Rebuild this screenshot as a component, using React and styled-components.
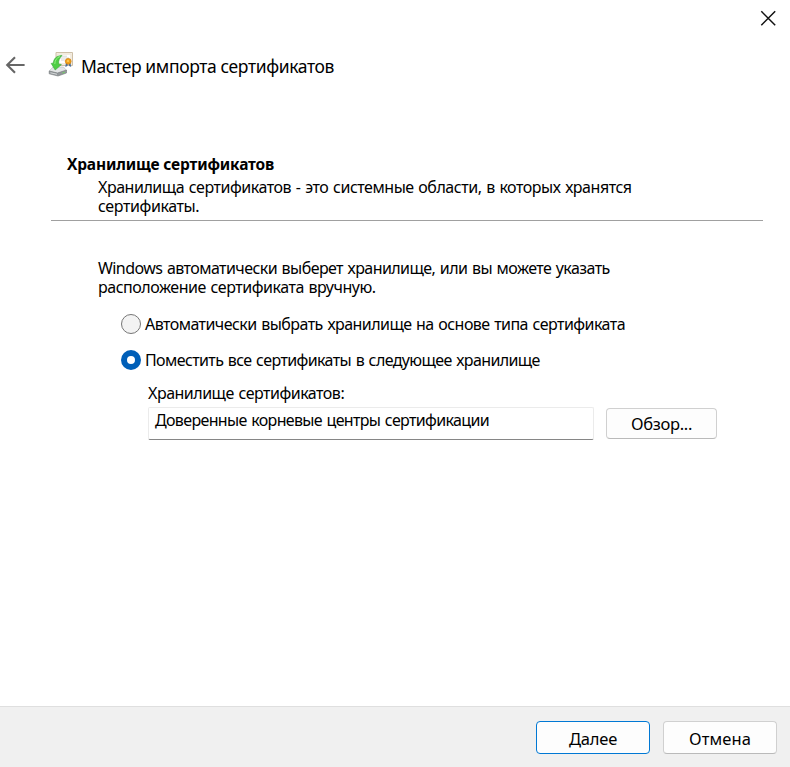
import styled, { createGlobalStyle } from "styled-components";

const GlobalStyle = createGlobalStyle`
  body {
    margin: 0;
    background-color: #fff;
    color: #000;
    font-family: "Noto Sans", "Open Sans", sans-serif;
  }
  button, input {
    font-family: inherit;
    color: inherit;
  }
`;

const Wizard = styled.div`
  display: flex;
  flex-direction: column;
  width: 790px;
  height: 767px;
  overflow: hidden;
`;

const TitleBar = styled.div`
  display: flex;
  justify-content: flex-end;
  height: 38px;
  padding-right: 13px;
`;
const CloseButton = styled.button`
  all: unset;
  width: 17px;
  height: 17px;
  margin-top: 10px;
  svg {
    display: block;
  }
`;

const Header = styled.header`
  display: flex;
  align-items: center;
  height: 54px;
  padding-left: 5px;
`;
const BackButton = styled.button`
  all: unset;
  width: 21px;
  height: 18px;
  margin-right: 22px;
  svg {
    display: block;
  }
`;
const HeaderIcon = styled.div`
  width: 26px;
  height: 26px;
  margin: 0 7px 2px 0;
  svg {
    display: block;
  }
`;
const WizardName = styled.h1`
  margin: 0;
  padding-top: 2px;
  font-size: 17.5px;
  font-weight: 400;
  line-height: 26px;
  letter-spacing: -0.38px;
  white-space: nowrap;
`;

const PageHead = styled.div`
  margin: 61px 27px 0 51px;
  height: 67px;
  border-bottom: 1px solid #a0a0a0;
`;
const PageTitle = styled.h2`
  margin: 0 0 3px 16px;
  font-size: 15.5px;
  font-weight: 700;
  line-height: 22px;
  letter-spacing: -0.17px;
`;
const PageText = styled.div`
  padding-left: 47px;
`;
const Line = styled.div`
  font-size: 16px;
  line-height: 19px;
  letter-spacing: ${(props) => props.$track}px;
  word-spacing: 1px;
  white-space: nowrap;
`;

const Content = styled.main`
  flex: 1;
  padding: 38px 0 0 98px;
`;
const Options = styled.div`
  display: flex;
  flex-direction: column;
  gap: 16px;
  margin: 17px 0 0 23px;
`;
const Option = styled.div`
  display: flex;
  align-items: center;
  gap: 4px;
  height: 20px;
`;
const Radio = styled.span`
  box-sizing: border-box;
  width: 20px;
  height: 20px;
  border-radius: 50%;
  border: ${(props) =>
    props.$checked ? "6px solid #005fb8" : "1px solid #767676"};
  background-color: ${(props) => (props.$checked ? "#fff" : "#f3f3f3")};
`;

const StoreField = styled.div`
  margin: 14px 0 0 50px;
`;
const StoreRow = styled.div`
  display: flex;
  align-items: center;
  gap: 12px;
  margin-top: 4px;
`;
const StoreBox = styled.div`
  box-sizing: border-box;
  width: 446px;
  height: 33px;
  padding: 3px 0 0 6px;
  border: 1px solid #ebebeb;
  border-bottom-color: #868686;
  border-radius: 2px;
`;

const Button = styled.button`
  box-sizing: border-box;
  width: ${(props) => props.$width}px;
  height: ${(props) => props.$height}px;
  padding: ${(props) => props.$drop || 0}px 0 0;
  border: 1px solid ${(props) => (props.$primary ? "#0078d4" : "#d0d0d0")};
  border-bottom-color: ${(props) => (props.$primary ? "#0078d4" : "#bababa")};
  border-radius: 4px;
  background-color: #fdfdfd;
  font-size: 16.5px;
  line-height: 22px;
  letter-spacing: ${(props) => props.$track || 0}px;
`;

const Footer = styled.footer`
  display: flex;
  justify-content: flex-end;
  gap: 13px;
  height: 46px;
  padding: 14px 13px 0 0;
  border-top: 1px solid #dfdfdf;
  background-color: #f0f0f0;
`;

const CloseIcon = () => (
  <svg width="17" height="17" viewBox="0 0 17 17">
    <path d="M1.3 1.3L15.2 15.2M15.2 1.3L1.3 15.2" stroke="#111" strokeWidth="1.5" />
  </svg>
);

const BackIcon = () => (
  <svg width="21" height="18" viewBox="0 0 21 18">
    <path
      d="M10 1.2L2.2 9L10 16.8M2.2 9H19.6"
      fill="none"
      stroke="#666"
      strokeWidth="2.1"
    />
  </svg>
);

// Certificate with a ribbon, and an arrow going down into a drive
const ImportIcon = () => (
  <svg width="26" height="26" viewBox="0 0 26 26">
    <path d="M8 1.5H24.5V14.5H8z" fill="#f5efe3" stroke="#cdbfa8" />
    <path d="M9.8 3.2H22.8V12.8H9.8z" fill="#fff" stroke="#e8dcc8" strokeWidth="0.7" />
    <path d="M12 5.2H19M12 7H21M13 9H17" stroke="#cdccc9" strokeWidth="0.8" />
    <path d="M18 11.5L17.3 15.9L19.4 15L20.2 12L21.2 15L23.2 15.9L22.4 11.5z" fill="#4a6f9c" />
    <circle cx="20.2" cy="10.3" r="2.9" fill="#f0a11c" stroke="#d07c09" strokeWidth="0.7" />
    <circle cx="20" cy="10" r="1" fill="#ffd15b" />
    <path d="M5 16H15.5L18.5 19.5L9.5 22.5L1.2 20z" fill="#e3e5e6" stroke="#b5b8ba" strokeWidth="0.6" />
    <path d="M1.2 20L9.5 22L18.5 19V22L10 25L1.2 22.8z" fill="#92979a" stroke="#73787b" strokeWidth="0.6" />
    <path d="M2.4 21.2L9 22.8V23.8L2.4 22.3z" fill="#d5d8d9" />
    <path d="M14.5 22L16.8 21.2" stroke="#6fd860" strokeWidth="1" />
    <path
      d="M14 4.4C8.6 4.6 5.7 7.6 5.2 12.2L3.2 12.4L7.2 19L13.4 13.6L10.6 12.9C10.4 9.5 11.4 7 14 4.4z"
      fill="#4fce45"
      stroke="#35a635"
      strokeWidth="0.6"
    />
    <path d="M12 5.5C8.6 6.8 7 9 6.8 13" fill="none" stroke="#91ee7f" strokeWidth="1" />
  </svg>
);

export default function App() {
  return (
    <Wizard>
      <GlobalStyle />
      <TitleBar>
        <CloseButton aria-label="Закрыть">
          <CloseIcon />
        </CloseButton>
      </TitleBar>
      <Header>
        <BackButton aria-label="Назад">
          <BackIcon />
        </BackButton>
        <HeaderIcon>
          <ImportIcon />
        </HeaderIcon>
        <WizardName>Мастер импорта сертификатов</WizardName>
      </Header>
      <PageHead>
        <PageTitle>Хранилище сертификатов</PageTitle>
        <PageText>
          <Line $track={-0.47}>
            Хранилища сертификатов - это системные области, в которых хранятся
          </Line>
          <Line $track={-0.4}>сертификаты.</Line>
        </PageText>
      </PageHead>
      <Content>
        <Line $track={-0.57}>
          Windows автоматически выберет хранилище, или вы можете указать
        </Line>
        <Line $track={-0.47}>расположение сертификата вручную.</Line>
        <Options>
          <Option>
            <Radio />
            <Line $track={-0.55}>
              Автоматически выбрать хранилище на основе типа сертификата
            </Line>
          </Option>
          <Option>
            <Radio $checked />
            <Line $track={-0.61}>
              Поместить все сертификаты в следующее хранилище
            </Line>
          </Option>
        </Options>
        <StoreField>
          <Line $track={-0.5}>Хранилище сертификатов:</Line>
          <StoreRow>
            <StoreBox>
              <Line $track={-0.65}>Доверенные корневые центры сертификации</Line>
            </StoreBox>
            <Button $width={111} $height={31} $track={-0.3}>
              Обзор...
            </Button>
          </StoreRow>
        </StoreField>
      </Content>
      <Footer>
        <Button $width={114} $height={33} $track={-0.2} $drop={2} $primary>
          Далее
        </Button>
        <Button $width={114} $height={33} $track={0.1} $drop={2}>
          Отмена
        </Button>
      </Footer>
    </Wizard>
  );
}
